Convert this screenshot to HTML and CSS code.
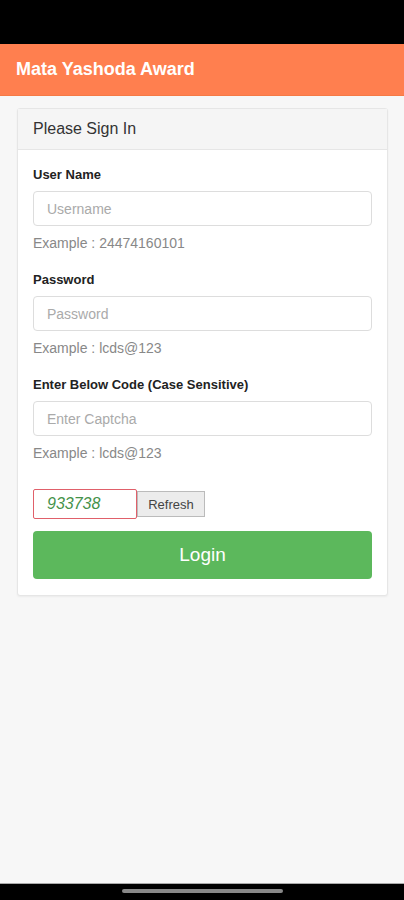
FILE: index.html
```html
<!DOCTYPE html>
<html>
<head>
<meta charset="utf-8">
<link rel="stylesheet" href="styles.css">
</head>
<body>
<div class="status"></div>
<header class="appbar">Mata Yashoda Award</header>
<main class="content">
  <section class="card">
    <div class="card-head">Please Sign In</div>
    <div class="card-body">
      <div class="field">
        <label class="label">User Name</label>
        <input class="input" placeholder="Username">
        <div class="hint">Example : 24474160101</div>
      </div>
      <div class="field">
        <label class="label">Password</label>
        <input class="input" placeholder="Password">
        <div class="hint">Example : lcds@123</div>
      </div>
      <div class="field">
        <label class="label">Enter Below Code (Case Sensitive)</label>
        <input class="input" placeholder="Enter Captcha">
        <div class="hint">Example : lcds@123</div>
      </div>
      <div class="captcha-row">
        <div class="captcha">933738</div>
        <button class="refresh">Refresh</button>
      </div>
      <button class="login">Login</button>
    </div>
  </section>
</main>
<div class="navbar"><div class="handle"></div></div>
</body>
</html>
```
FILE: styles.css
```css
* { box-sizing: border-box; }
html, body { margin: 0; padding: 0; }
body {
  width: 404px;
  height: 900px;
  display: flex;
  flex-direction: column;
  background: #f7f7f7;
  font-family: "Liberation Sans", Arial, sans-serif;
  color: #333;
}
.status { height: 44px; background: #000; flex: none; }
.appbar {
  height: 52px;
  flex: none;
  background: #ff7f4f;
  color: #fff;
  font-weight: bold;
  font-size: 18px;
  padding-left: 16px;
  display: flex;
  align-items: center;
  border-bottom: 1px solid #f57a45;
}
.content {
  flex: 1;
  padding: 12px 16px 0 17px;
}
.card {
  background: #fff;
  border: 1px solid #e6e6e6;
  border-radius: 3px;
  box-shadow: 0 1px 2px rgba(0,0,0,0.05);
}
.card-head {
  height: 41px;
  background: #f5f5f5;
  border-bottom: 1px solid #e6e6e6;
  padding-left: 15px;
  display: flex;
  align-items: center;
  font-size: 16px;
  color: #333;
}
.card-body {
  padding: 16px 15px 16px 15px;
}
.field {
  display: flex;
  flex-direction: column;
}
.label {
  font-weight: bold;
  font-size: 13px;
  color: #222;
  line-height: 18px;
  margin-bottom: 7px;
}
.input {
  height: 35px;
  border: 1px solid #ddd;
  border-radius: 4px;
  padding: 0 13px;
  font-family: inherit;
  font-size: 14px;
  color: #555;
  outline: none;
  background: #fff;
}
.input::placeholder { color: #aaa; }
.hint {
  font-size: 14px;
  color: #888;
  line-height: 18px;
  margin-top: 8px;
  margin-bottom: 19px;
}
.captcha-row {
  display: flex;
  align-items: center;
  margin-top: 8px;
}
.captcha {
  width: 104px;
  height: 30px;
  border: 1.5px solid #e0606a;
  border-radius: 2px;
  display: flex;
  align-items: center;
  padding-left: 13px;
  font-style: italic;
  font-size: 16px;
  color: #45924a;
  background: #fff;
}
.refresh {
  height: 26px;
  width: 68px;
  border: 1px solid #bbb;
  background: #ececec;
  font-family: inherit;
  font-size: 13px;
  color: #444;
  padding: 0;
  border-radius: 0;
}
.login {
  display: block;
  width: 100%;
  height: 48px;
  margin-top: 12px;
  background: #5cb85c;
  border: none;
  border-radius: 4px;
  color: #fff;
  font-family: inherit;
  font-size: 19px;
}
.navbar {
  height: 17px;
  flex: none;
  background: #000;
  border-top: 1px solid #aaa;
  display: flex;
  justify-content: center;
  padding-top: 5px;
}
.handle {
  width: 161px;
  height: 4px;
  border-radius: 2px;
  background: #888;
}
```
